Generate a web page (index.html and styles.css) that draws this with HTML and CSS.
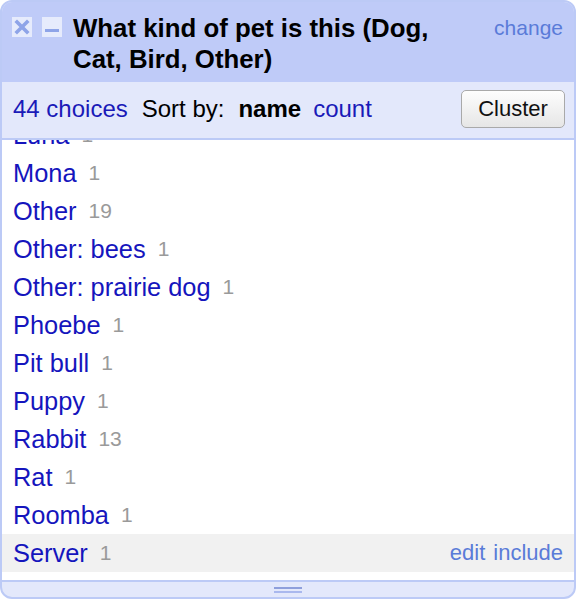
FILE: index.html
```html
<!DOCTYPE html>
<html>
<head>
<meta charset="utf-8">
<link rel="stylesheet" href="styles.css">
</head>
<body>
<div class="facet">
  <div class="facet-header">
    <div class="icons">
      <span class="icon-btn">
        <svg width="20" height="20" viewBox="0 0 20 20"><path d="M5 5 L15 15 M15 5 L5 15" stroke="#8ea4e8" stroke-width="3.6" stroke-linecap="square"/></svg>
      </span>
      <span class="icon-btn">
        <svg width="20" height="20" viewBox="0 0 20 20"><rect x="3" y="12" width="14" height="3" fill="#8ea4e8"/></svg>
      </span>
    </div>
    <div class="title">What kind of pet is this (Dog, Cat, Bird, Other)</div>
    <a class="change">change</a>
  </div>
  <div class="controls">
    <a class="choices">44 choices</a>
    <span class="sort-label">Sort by:</span>
    <span class="sort-active">name</span>
    <a class="sort-link">count</a>
    <span class="spacer"></span>
    <button class="cluster">Cluster</button>
  </div>
  <div class="list">
    <div class="list-inner">
      <div class="row"><a class="name">Luna</a><span class="count">1</span></div>
      <div class="row"><a class="name">Mona</a><span class="count">1</span></div>
      <div class="row"><a class="name">Other</a><span class="count">19</span></div>
      <div class="row"><a class="name">Other: bees</a><span class="count">1</span></div>
      <div class="row"><a class="name">Other: prairie dog</a><span class="count">1</span></div>
      <div class="row"><a class="name">Phoebe</a><span class="count">1</span></div>
      <div class="row"><a class="name">Pit bull</a><span class="count">1</span></div>
      <div class="row"><a class="name">Puppy</a><span class="count">1</span></div>
      <div class="row"><a class="name">Rabbit</a><span class="count">13</span></div>
      <div class="row"><a class="name">Rat</a><span class="count">1</span></div>
      <div class="row"><a class="name">Roomba</a><span class="count">1</span></div>
      <div class="row hover"><a class="name">Server</a><span class="count">1</span><span class="spacer"></span><a class="action">edit</a><a class="action">include</a></div>
      <div class="row"><a class="name">Snake</a><span class="count">1</span></div>
    </div>
  </div>
  <div class="footer">
    <div class="handle"><span class="l1"></span><span class="l2"></span></div>
  </div>
</div>
</body>
</html>
```
FILE: styles.css
```css
html, body {
  margin: 0;
  padding: 0;
  background: #ffffff;
}
body {
  font-family: "Liberation Sans", Arial, sans-serif;
}
.facet {
  width: 572px;
  border: 2px solid #bccaf6;
  border-radius: 12px;
  overflow: hidden;
  background: #e3e8fb;
}
.facet-header {
  display: flex;
  align-items: flex-start;
  height: 80px;
  box-sizing: border-box;
  padding: 11px 11px 0 10px;
  background: #bfcbf8;
}
.icons {
  display: flex;
  gap: 10px;
  padding-top: 4px;
}
.icon-btn {
  display: block;
  width: 20px;
  height: 20px;
  background: #e6ebfc;
}
.icon-btn svg {
  display: block;
}
.title {
  width: 400px;
  margin-left: 11px;
  font-weight: bold;
  font-size: 25.8px;
  line-height: 31px;
  color: #000;
}
.change {
  margin-left: auto;
  padding-top: 3px;
  font-size: 21px;
  color: #5a7bd8;
}
.controls {
  display: flex;
  align-items: center;
  height: 58px;
  box-sizing: border-box;
  padding: 0 9px 2px 11px;
  border-bottom: 2px solid #bccaf6;
  font-size: 24px;
}
.choices {
  color: #1a1ab8;
}
.sort-label {
  margin-left: 14px;
  color: #000;
}
.sort-active {
  margin-left: 14px;
  font-weight: bold;
  color: #000;
}
.sort-link {
  margin-left: 12px;
  color: #1a1ab8;
}
.spacer {
  flex: 1;
}
.cluster {
  width: 104px;
  height: 38px;
  font-family: "Liberation Sans", Arial, sans-serif;
  font-size: 22px;
  color: #111;
  border: 1.5px solid #a9a9a9;
  border-radius: 5px;
  background: linear-gradient(#fdfdfd, #e6e6e6);
  padding: 0;
}
.list {
  height: 440px;
  overflow: hidden;
  background: #fff;
  border-bottom: 2px solid #bccaf6;
}
.list-inner {
  margin-top: -24px;
}
.row {
  display: flex;
  align-items: center;
  height: 38px;
  padding: 0 11px;
}
.row.hover {
  background: #f1f1f1;
}
.name {
  font-size: 25.4px;
  color: #1515bd;
}
.count {
  margin-left: 12px;
  font-size: 21px;
  color: #9a9a9a;
}
.action {
  margin-left: 8px;
  font-size: 22px;
  color: #5a7bd8;
}
.footer {
  height: 15px;
  display: flex;
  justify-content: center;
  align-items: center;
}
.handle {
  display: flex;
  flex-direction: column;
  gap: 2px;
  width: 28px;
}
.handle span {
  display: block;
  height: 2px;
}
.handle .l1 {
  background: #8e9fdc;
}
.handle .l2 {
  background: #a9b8ee;
}
```
